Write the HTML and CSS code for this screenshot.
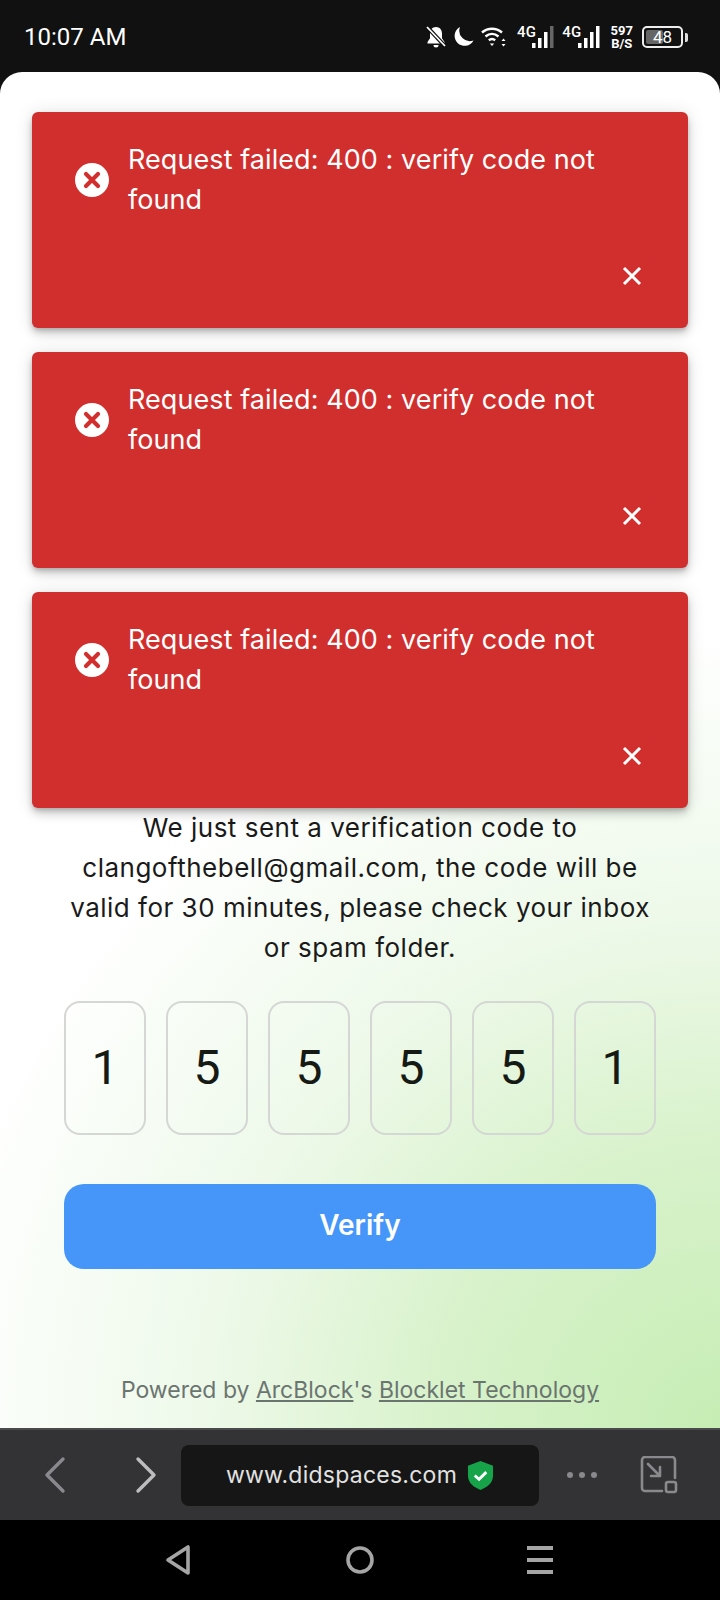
FILE: index.html
```html
<!DOCTYPE html>
<html lang="en">
<head>
    <meta charset="UTF-8">
    <meta name="viewport" content="width=device-width, initial-scale=1.0">
    <title>Verify code</title>
    <link rel="stylesheet" href="styles.css">
</head>
<body>
    <div class="statusbar">
        <span class="time">10:07 AM</span>
        <div class="status-icons">
            <svg class="ic-bell" width="20" height="24" viewBox="0 0 20 24"><path d="M10 2c-3.600 0-6 2.800-6 6.400v4.800L1.500 17v1.500h17V17L16 13.200V8.400C16 4.800 13.600 2 10 2z" fill="#fff"/><path d="M7.500 20h5a2.500 2.500 0 0 1-5 0z" fill="#fff"/><path d="M1 2l18 19" stroke="#111" stroke-width="4"/><path d="M1 2l18 19" stroke="#fff" stroke-width="1.800"/></svg>
            <svg class="ic-moon" width="22" height="22" viewBox="0 0 22 22"><path d="M8 1a10 10 0 1 0 13.500 13.500A10.500 10.500 0 0 1 8 1z" fill="#fff"/></svg>
            <svg class="ic-wifi" width="26" height="22" viewBox="0 0 26 22"><g fill="none" stroke="#fff" stroke-width="2.400"><path d="M1 6.500c6-5 14-5 20 0"/><path d="M4.500 10.500c4-3.400 9-3.400 13 0"/><path d="M7.800 14.200c2-1.600 4.400-1.600 6.400 0"/></g><path d="M8.800 17.500h4.400L11 20z" fill="#fff"/><path d="M22.500 12.500l2 2.500h-4zM22.500 20.500l-2-2.500h4z" fill="#fff"/></svg>
            <div class="signal">
                <span class="net">4G</span>
                <svg width="22" height="22" viewBox="0 0 22 22"><rect x="0" y="17" width="3.500" height="5" fill="#fff"/><rect x="6" y="12" width="3.500" height="10" fill="#fff"/><rect x="12" y="6" width="3.500" height="16" fill="#fff"/><rect x="18" y="0" width="3.500" height="22" fill="#666"/></svg>
            </div>
            <div class="signal">
                <span class="net">4G</span>
                <svg width="22" height="22" viewBox="0 0 22 22"><rect x="0" y="17" width="3.500" height="5" fill="#fff"/><rect x="6" y="12" width="3.500" height="10" fill="#fff"/><rect x="12" y="6" width="3.500" height="16" fill="#fff"/><rect x="18" y="0" width="3.500" height="22" fill="#fff"/></svg>
            </div>
            <div class="speed"><span>597</span><span>B/S</span></div>
            <div class="battery">
                <div class="battery-body"><div class="battery-fill"></div><span class="battery-num">48</span></div>
                <div class="battery-tip"></div>
            </div>
        </div>
    </div>

    <div class="page">
        <div class="toasts">
            <div class="toast">
                <svg class="toast-icon" width="34" height="34" viewBox="0 0 34 34"><circle cx="17" cy="17" r="17" fill="#fff"/><path d="M11 11l12 12M23 11L11 23" stroke="#d12f2d" stroke-width="4.200" stroke-linecap="round"/></svg>
                <div class="toast-msg">Request failed: 400 : verify code not found</div>
                <svg class="toast-close" width="20" height="20" viewBox="0 0 20 20"><path d="M2 2l16 16M18 2L2 18" stroke="#fff" stroke-width="3"/></svg>
            </div>
            <div class="toast">
                <svg class="toast-icon" width="34" height="34" viewBox="0 0 34 34"><circle cx="17" cy="17" r="17" fill="#fff"/><path d="M11 11l12 12M23 11L11 23" stroke="#d12f2d" stroke-width="4.200" stroke-linecap="round"/></svg>
                <div class="toast-msg">Request failed: 400 : verify code not found</div>
                <svg class="toast-close" width="20" height="20" viewBox="0 0 20 20"><path d="M2 2l16 16M18 2L2 18" stroke="#fff" stroke-width="3"/></svg>
            </div>
            <div class="toast">
                <svg class="toast-icon" width="34" height="34" viewBox="0 0 34 34"><circle cx="17" cy="17" r="17" fill="#fff"/><path d="M11 11l12 12M23 11L11 23" stroke="#d12f2d" stroke-width="4.200" stroke-linecap="round"/></svg>
                <div class="toast-msg">Request failed: 400 : verify code not found</div>
                <svg class="toast-close" width="20" height="20" viewBox="0 0 20 20"><path d="M2 2l16 16M18 2L2 18" stroke="#fff" stroke-width="3"/></svg>
            </div>
        </div>

        <div class="verify">
            <p class="intro">We just sent a verification code to clangofthebell@gmail.com, the code will be valid for 30 minutes, please check your inbox or spam folder.</p>
            <div class="code">
                <div class="digit">1</div>
                <div class="digit">5</div>
                <div class="digit">5</div>
                <div class="digit">5</div>
                <div class="digit">5</div>
                <div class="digit">1</div>
            </div>
            <button class="verify-btn">Verify</button>
            <div class="powered">Powered by <a href="#">ArcBlock</a>'s <a href="#">Blocklet Technology</a></div>
        </div>
    </div>

    <div class="browserbar">
        <svg class="nav-arrow" width="24" height="38" viewBox="0 0 24 38"><path d="M20 3L4 19l16 16" fill="none" stroke="#8a8a8e" stroke-width="3.400" stroke-linecap="round" stroke-linejoin="round"/></svg>
        <svg class="nav-arrow" width="24" height="38" viewBox="0 0 24 38"><path d="M4 3l16 16L4 35" fill="none" stroke="#bdbdc0" stroke-width="3.400" stroke-linecap="round" stroke-linejoin="round"/></svg>
        <div class="address">
            <span class="url">www.didspaces.com</span>
            <svg width="27" height="31" viewBox="0 0 28 32"><path d="M14 1l13 5v10c0 8-6 12-13 15C7 28 1 24 1 16V6z" fill="#16a34a"/><path d="M8 16l4.500 4L20 12.500" fill="none" stroke="#fff" stroke-width="3"/></svg>
        </div>
        <div class="dots"><i></i><i></i><i></i></div>
        <svg class="ic-pip" width="38" height="38" viewBox="0 0 38 38"><g fill="none" stroke="#8a8a8e" stroke-width="2.600" stroke-linecap="round" stroke-linejoin="round"><path d="M22 35H5a3 3 0 0 1-3-3V4a3 3 0 0 1 3-3h27a3 3 0 0 1 3 3v18"/><path d="M8 8l12 12M20 11v9h-9"/><rect x="26" y="26" width="10" height="10" rx="2"/></g></svg>
    </div>

    <div class="navbar">
        <svg width="26" height="32" viewBox="0 0 26 32"><path d="M23 3v26L3 16z" fill="none" stroke="#a5a5a5" stroke-width="3.600" stroke-linejoin="round"/></svg>
        <svg class="nav-home" width="28" height="28" viewBox="0 0 28 28"><circle cx="14" cy="14" r="12" fill="none" stroke="#a5a5a5" stroke-width="3.600"/></svg>
        <div class="menu"><i></i><i></i><i></i></div>
    </div>
</body>
</html>
```
FILE: styles.css
```css
* {
    box-sizing: border-box;
}

body {
    margin: 0;
    width: 720px;
    height: 1600px;
    display: flex;
    flex-direction: column;
    background: #111;
    font-family: Inter, "Noto Sans", sans-serif;
    font-feature-settings: "calt" 0;
    overflow: hidden;
}

/* status bar */
.statusbar {
    height: 72px;
    flex: none;
    display: flex;
    justify-content: space-between;
    align-items: center;
    padding: 2px 32px 0 24px;
    color: #fff;
}

.time {
    font-family: Roboto, sans-serif;
    font-size: 24px;
}

.status-icons {
    display: flex;
    align-items: center;
    font-family: Roboto, sans-serif;
}

.ic-moon {
    margin-left: 6px;
}

.ic-wifi {
    margin-left: 7px;
}

.signal {
    display: flex;
    align-items: flex-end;
    height: 22px;
    margin-left: 8px;
}

.ic-wifi + .signal {
    margin-left: 10px;
}

.net {
    font-size: 15px;
    font-weight: 500;
    line-height: 13px;
    align-self: flex-start;
    margin-right: -3.500px;
}

.speed {
    display: flex;
    flex-direction: column;
    align-items: center;
    font-size: 13px;
    font-weight: 700;
    line-height: 12px;
    margin-left: 11px;
}

.speed span + span {
    margin-top: 1px;
}

.battery {
    display: flex;
    align-items: center;
    gap: 2px;
    margin-left: 9px;
}

.battery-body {
    position: relative;
    width: 41px;
    height: 22px;
    border: 2px solid #eee;
    border-radius: 5px;
    padding: 2px;
}

.battery-fill {
    width: 17px;
    height: 14px;
    background: #666;
    border-radius: 2px;
}

.battery-num {
    position: absolute;
    inset: 0;
    text-align: center;
    font-size: 17px;
    line-height: 18px;
    font-weight: 400;
}

.battery-tip {
    width: 3px;
    height: 9px;
    background: #ddd;
    border-radius: 0 2px 2px 0;
}

/* page area */
.page {
    position: relative;
    flex: 1;
    border-radius: 22px 22px 0 0;
    background: radial-gradient(circle 800px at 100% 100%, #c6edb4 0%, #d8f2cb 35%, #eef9ea 65%, #fff 100%);
    display: flex;
    flex-direction: column;
    justify-content: flex-end;
}

.toasts {
    position: absolute;
    top: 40px;
    left: 32px;
    right: 32px;
    display: flex;
    flex-direction: column;
    gap: 24px;
}

.toast {
    position: relative;
    height: 216px;
    background: #d12f2d;
    color: #fff;
    border-radius: 6px;
    padding: 28px 80px 0 96px;
    box-shadow: 0 3px 5px -1px rgba(0,0,0,.2), 0 6px 10px 0 rgba(0,0,0,.14), 0 1px 18px 0 rgba(0,0,0,.12);
}

.toast-icon {
    position: absolute;
    left: 43px;
    top: 51px;
}

.toast-close {
    position: absolute;
    right: 46px;
    top: 154px;
}

.toast-msg {
    font-size: 27px;
    line-height: 40px;
    letter-spacing: .07px;
}

.verify {
    padding: 0 64px 22px;
    text-align: center;
}

.intro {
    margin: 0 0 33px;
    font-size: 26px;
    line-height: 40px;
    letter-spacing: .5px;
    color: #1a1a1a;
}

.code {
    display: flex;
    justify-content: space-between;
}

.digit {
    width: 82px;
    height: 134px;
    border: 2px solid #d4d7d4;
    border-radius: 16px;
    display: flex;
    align-items: center;
    justify-content: center;
    padding-bottom: 2px;
    font-family: Roboto, sans-serif;
    font-size: 48px;
    color: #151a15;
}

.verify-btn {
    display: block;
    width: 100%;
    height: 85px;
    margin-top: 49px;
    padding: 0 0 3px;
    border: 0;
    border-radius: 20px;
    background: #4596f8;
    color: #fff;
    font-family: inherit;
    font-size: 28px;
    font-weight: 600;
}

.powered {
    margin-top: 105px;
    font-size: 23px;
    line-height: 32px;
    color: #6b7570;
}

.powered a {
    color: #6b7570;
}

/* browser toolbar */
.browserbar {
    height: 92px;
    flex: none;
    display: flex;
    align-items: center;
    background: #333335;
    border-top: 2px solid #4a4a4c;
    padding-left: 43px;
}

.nav-arrow + .nav-arrow {
    margin-left: 67px;
}

.address {
    width: 358px;
    height: 61px;
    margin-left: 23px;
    background: #161616;
    border-radius: 8px;
    display: flex;
    align-items: center;
    justify-content: center;
    gap: 10px;
}

.url {
    color: #e2e2e2;
    font-size: 23px;
    letter-spacing: .25px;
}

.dots {
    display: flex;
    gap: 6px;
    margin-left: 28px;
}

.dots i {
    width: 6px;
    height: 6px;
    border-radius: 50%;
    background: #8a8a8e;
}

.ic-pip {
    margin-left: 43px;
}

/* android nav */
.navbar {
    height: 80px;
    flex: none;
    display: flex;
    align-items: center;
    background: #000;
    padding: 0 167px 0 165px;
    justify-content: space-between;
}

.nav-home {
    margin-left: 2px;
}

.menu {
    display: flex;
    flex-direction: column;
    gap: 8px;
}

.menu i {
    display: block;
    width: 26px;
    height: 4px;
    background: #a5a5a5;
}
```
